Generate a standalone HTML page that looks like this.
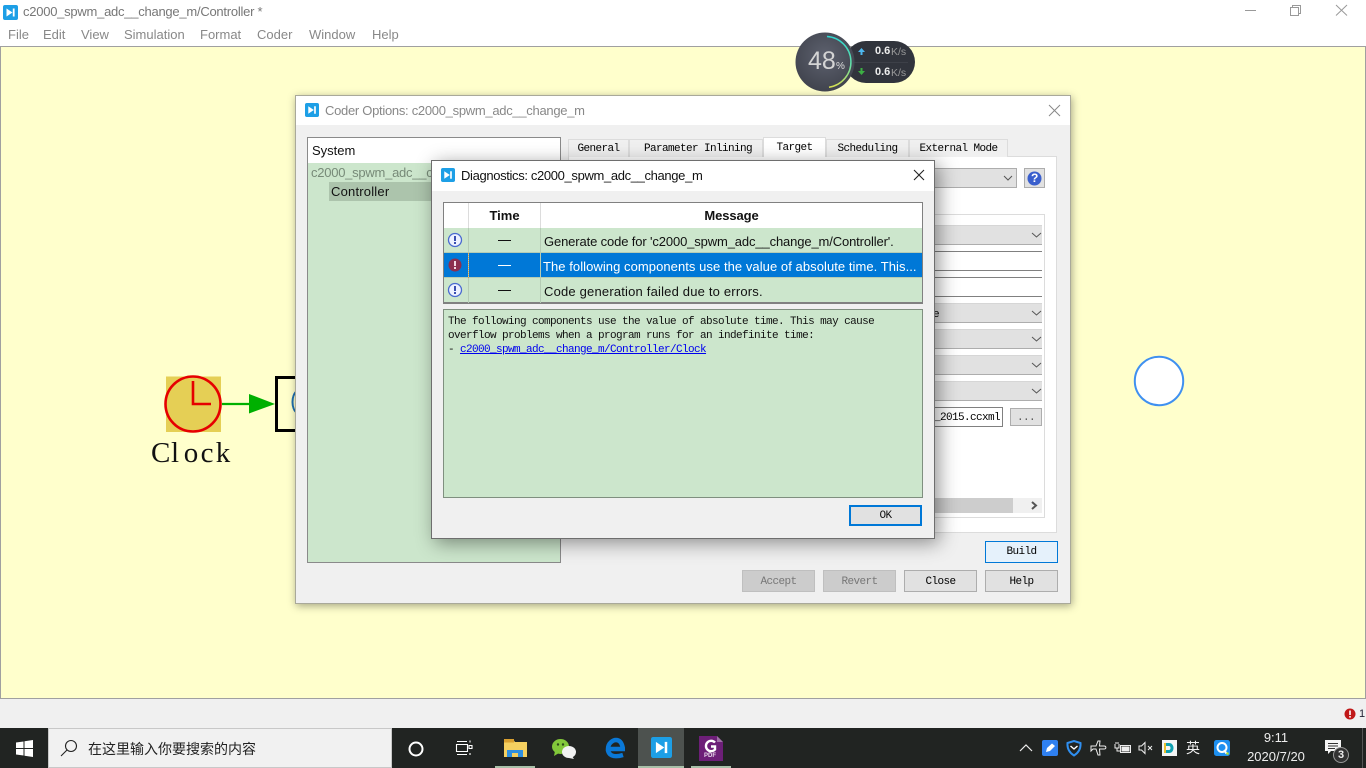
<!DOCTYPE html>
<html lang="en">
<head>
<meta charset="utf-8">
<title>c2000_spwm_adc__change_m/Controller</title>
<style>
html,body{margin:0;padding:0;width:1366px;height:768px;overflow:hidden;background:#fff;}
body{position:relative;font-family:"Liberation Sans","Noto Sans CJK SC",sans-serif;font-size:13px;color:#000;}
div,span,a,svg{position:absolute;box-sizing:border-box;white-space:nowrap;}
.m{font-family:"Liberation Mono","Noto Sans CJK SC",monospace;font-size:11px;letter-spacing:-.6px;line-height:14px;}
.mn{color:#888;top:27px;line-height:16px;font-size:13px;}
.btn{background:#e1e1e1;border:1px solid #adadad;height:22px;width:73px;top:570px;text-align:center;line-height:22px;}
.cb{background:#e1e1e1;border-bottom:1px solid #adadad;border-top:1px solid #d6d6d6;left:930px;width:112px;height:20px;}
.tab{top:139px;height:18px;background:#f0f0f0;border:1px solid #dcdcdc;border-bottom:none;text-align:center;line-height:18px;}
.ck{top:437px;width:16px;text-align:center;font-family:"Liberation Serif",serif;font-size:29px;line-height:32px;color:#111;}
</style>
</head>
<body>
<!-- title bar -->
<svg style="left:3px;top:5px" width="15" height="15" viewBox="0 0 15 15"><rect width="15" height="15" rx="2" fill="#1d9fe6"/><path d="M3.5 3.5L9.500 7.500L3.500 11.500Z" fill="#fff"/><rect x="9.800" y="3.500" width="1.800" height="8" fill="#fff"/></svg>
<span style="left:23px;top:3px;color:#777;line-height:18px;font-size:13px;letter-spacing:-.25px">c2000_spwm_adc__change_m/Controller *</span>
<span class="mn" style="left:8px">File</span>
<span class="mn" style="left:43px">Edit</span>
<span class="mn" style="left:81px">View</span>
<span class="mn" style="left:124px">Simulation</span>
<span class="mn" style="left:200px">Format</span>
<span class="mn" style="left:257px">Coder</span>
<span class="mn" style="left:309px">Window</span>
<span class="mn" style="left:372px">Help</span>
<svg style="left:1240px;top:0" width="126" height="20" viewBox="0 0 126 20" fill="none" stroke="#999" stroke-width="1"><path d="M5 10.500H16"/><path d="M50.500 7.500H58.500V15.500H50.500ZM52.500 7.500V5.500H60.500V13.500H58.500"/><path d="M96 5L107 15.500M107 5L96 15.500"/></svg>

<!-- canvas -->
<div style="left:0;top:46px;width:1366px;height:653px;background:#ffffcc;border:1px solid #a0a0a0"></div>
<div style="left:0;top:699px;width:1366px;height:29px;background:#f0f0f0"></div>

<!-- clock block -->
<svg style="left:140px;top:365px" width="160" height="80" viewBox="140 365 160 80">
<rect x="166" y="376.500" width="55" height="55.500" fill="#e5cf55"/>
<circle cx="193" cy="404" r="27.500" fill="#e5cf55" stroke="#e60000" stroke-width="2.600"/>
<path d="M193 381V404H211" fill="none" stroke="#e60000" stroke-width="2.600"/>
<path d="M222 404H252" stroke="#00b000" stroke-width="2.200"/>
<path d="M249 394L275 404L249 413.500Z" fill="#00b000"/>
<path d="M296 377.500H276.500V430.500H296" fill="none" stroke="#000" stroke-width="3"/>
<path d="M297 391C291 395 291 409 297 413" fill="none" stroke="#1e6fb0" stroke-width="2"/>
</svg>
<span class="ck" style="left:151px">C</span>
<span class="ck" style="left:167px">l</span>
<span class="ck" style="left:183px">o</span>
<span class="ck" style="left:199px">c</span>
<span class="ck" style="left:215px">k</span>

<!-- circle -->
<svg style="left:1130px;top:352px" width="58" height="58"><circle cx="29" cy="29" r="24.200" fill="#fff" stroke="#3f90f0" stroke-width="2"/></svg>

<!-- Coder Options dialog -->
<div style="left:295px;top:95px;width:776px;height:509px;background:#f0f0f0;border:1px solid #a9a99a;box-shadow:1px 2px 8px rgba(0,0,0,.35)"></div>
<div style="left:296px;top:96px;width:774px;height:29px;background:#fff"></div>
<svg style="left:305px;top:103px" width="14" height="14" viewBox="0 0 15 15"><rect width="15" height="15" rx="2" fill="#1d9fe6"/><path d="M3.500 3.500L9.500 7.500L3.500 11.500Z" fill="#fff"/><rect x="9.800" y="3.500" width="1.800" height="8" fill="#fff"/></svg>
<span style="left:325px;top:102px;color:#888;line-height:18px;letter-spacing:-.29px">Coder Options: c2000_spwm_adc__change_m</span>
<svg style="left:1048px;top:104px" width="13" height="13" fill="none" stroke="#888" stroke-width="1"><path d="M1 1L12 12M12 1L1 12"/></svg>

<!-- left tree -->
<div style="left:307px;top:137px;width:254px;height:426px;background:#cce6cc;border:1px solid #8a8a8a"></div>
<div style="left:308px;top:138px;width:252px;height:25px;background:#fff"></div>
<span style="left:312px;top:143px;line-height:16px;color:#111">System</span>
<span style="left:311px;top:165px;line-height:16px;color:#778a78;letter-spacing:-.25px">c2000_spwm_adc__ch</span>
<div style="left:329px;top:182px;width:110px;height:19px;background:#acc4ac"></div>
<span style="left:331px;top:184px;line-height:16px;color:#111;letter-spacing:.2px">Controller</span>

<!-- tabs -->
<div style="left:568px;top:156px;width:489px;height:377px;background:#fff;border:1px solid #dcdcdc"></div>
<div class="tab m" style="left:568px;width:61px">General</div>
<div class="tab m" style="left:629px;width:134px;padding-left:4px">Parameter Inlining</div>
<div class="tab m" style="left:763px;width:63px;top:137px;height:20px;background:#fff;line-height:20px">Target</div>
<div class="tab m" style="left:826px;width:83px">Scheduling</div>
<div class="tab m" style="left:909px;width:99px">External Mode</div>

<div style="left:900px;top:168px;width:117px;height:20px;background:#e1e1e1;border:1px solid #adadad"></div>
<svg style="left:1003px;top:175px" width="10" height="7" fill="none" stroke="#555"><path d="M1 1L5 5L9 1"/></svg>
<div style="left:1024px;top:168px;width:21px;height:20px;background:#e1e1e1;border:1px solid #adadad"></div>
<svg style="left:1026px;top:170px" width="17" height="17" viewBox="0 0 17 17"><circle cx="8.500" cy="8.500" r="7" fill="#3a5fcd"/></svg>
<span style="left:1031px;top:170px;color:#fff;font-weight:bold;font-size:12px;line-height:16px">?</span>

<div style="left:900px;top:214px;width:145px;height:304px;background:#fff;border:1px solid #dcdcdc"></div>
<div class="cb" style="top:225px"></div>
<div style="left:930px;top:251px;width:112px;height:20px;background:#fff;border-top:1px solid #808080;border-bottom:1px solid #808080"></div>
<div style="left:930px;top:277px;width:112px;height:20px;background:#fff;border-top:1px solid #808080;border-bottom:1px solid #808080"></div>
<div class="cb" style="top:303px"></div>
<div class="cb" style="top:329px"></div>
<div class="cb" style="top:355px"></div>
<div class="cb" style="top:381px"></div>
<svg style="left:1031px;top:226px" width="12" height="176" fill="none" stroke="#555"><path d="M1 7L5.500 11L10 7M1 85L5.500 89L10 85M1 111L5.500 115L10 111M1 137L5.500 141L10 137M1 163L5.500 167L10 163"/></svg>
<span class="m" style="left:933px;top:308px">e</span>
<div style="left:930px;top:407px;width:73px;height:20px;background:#fff;border:1px solid #808080"></div>
<span class="m" style="left:934px;top:411px">_2015.ccxml</span>
<div class="m" style="left:1010px;top:408px;width:32px;height:18px;background:#e1e1e1;border:1px solid #adadad;text-align:center;line-height:18px;color:#555">...</div>
<div style="left:930px;top:498px;width:112px;height:15px;background:#f0f0f0"></div>
<div style="left:930px;top:498px;width:83px;height:15px;background:#cdcdcd"></div>
<svg style="left:1030px;top:501px" width="8" height="9" fill="none" stroke="#555" stroke-width="2"><path d="M2 1L6 4.500L2 8"/></svg>

<div class="btn m" style="left:985px;top:541px;background:#e5f1fb;border-color:#0078d7;line-height:21px">Build</div>
<div class="btn m" style="left:742px;background:#ccc;border-color:#bfbfbf;color:#777">Accept</div>
<div class="btn m" style="left:823px;background:#ccc;border-color:#bfbfbf;color:#777">Revert</div>
<div class="btn m" style="left:904px">Close</div>
<div class="btn m" style="left:985px">Help</div>

<!-- Diagnostics dialog -->
<div style="left:431px;top:160px;width:504px;height:379px;background:#f0f0f0;border:1px solid #6e6e6e;box-shadow:4px 4px 18px rgba(0,0,0,.42)"></div>
<div style="left:432px;top:161px;width:502px;height:30px;background:#fff"></div>
<svg style="left:441px;top:168px" width="14" height="14" viewBox="0 0 15 15"><rect width="15" height="15" rx="2" fill="#1d9fe6"/><path d="M3.500 3.500L9.500 7.500L3.500 11.500Z" fill="#fff"/><rect x="9.800" y="3.500" width="1.800" height="8" fill="#fff"/></svg>
<span style="left:461px;top:167px;line-height:18px;color:#111;letter-spacing:-.35px">Diagnostics: c2000_spwm_adc__change_m</span>
<svg style="left:913px;top:169px" width="12" height="12" fill="none" stroke="#222" stroke-width="1.100"><path d="M1 1L11 11M11 1L1 11"/></svg>

<!-- table -->
<div style="left:443px;top:202px;width:480px;height:102px;background:#cce6cc;border:1px solid #808080;border-bottom-width:2px"></div>
<div style="left:444px;top:203px;width:478px;height:25px;background:#fff"></div>
<div style="left:444px;top:253px;width:478px;height:25px;background:#0078d7"></div>
<div style="left:444px;top:252px;width:478px;height:1px;background:#b5ccb5"></div>
<div style="left:444px;top:277px;width:478px;height:1px;background:#b5ccb5"></div>
<div style="left:468px;top:203px;width:1px;height:25px;background:#dcdcdc"></div>
<div style="left:540px;top:203px;width:1px;height:25px;background:#dcdcdc"></div>
<div style="left:468px;top:228px;width:1px;height:75px;background:#b5ccb5"></div>
<div style="left:467px;top:253px;width:2px;height:25px;border-right:1px dotted #e0a040"></div>
<div style="left:540px;top:228px;width:1px;height:75px;background:#b5ccb5"></div>
<div style="left:469px;top:203px;width:71px;height:25px;text-align:center;font-weight:bold;line-height:25px;color:#111">Time</div>
<div style="left:541px;top:203px;width:381px;height:25px;text-align:center;font-weight:bold;line-height:25px;color:#111;letter-spacing:-.1px">Message</div>
<div style="left:498px;top:240px;width:13px;height:1px;background:#111"></div>
<div style="left:498px;top:265px;width:13px;height:1px;background:#fff"></div>
<div style="left:498px;top:290px;width:13px;height:1px;background:#111"></div>
<span style="left:544px;top:233px;line-height:17px;color:#111;letter-spacing:-.13px">Generate code for 'c2000_spwm_adc__change_m/Controller'.</span>
<span style="left:543px;top:258px;line-height:17px;color:#fff;letter-spacing:.06px">The following components use the value of absolute time. This...</span>
<span style="left:544px;top:283px;line-height:17px;color:#111;letter-spacing:.19px">Code generation failed due to errors.</span>
<svg style="left:446px;top:231px" width="20" height="70" viewBox="0 0 20 70">
<circle cx="9" cy="9" r="6.500" fill="#eef2ff" stroke="#4a6ad0" stroke-width="1.300"/><rect x="8" y="5" width="2" height="5" fill="#3a4fb0"/><rect x="8" y="11" width="2" height="2" fill="#3a4fb0"/>
<circle cx="9" cy="34" r="6.500" fill="#8c2f4e"/><rect x="8" y="30" width="2" height="5" fill="#f0d8e0"/><rect x="8" y="36" width="2" height="2" fill="#f0d8e0"/>
<circle cx="9" cy="59" r="6.500" fill="#eef2ff" stroke="#4a6ad0" stroke-width="1.300"/><rect x="8" y="55" width="2" height="5" fill="#3a4fb0"/><rect x="8" y="61" width="2" height="2" fill="#3a4fb0"/>
</svg>

<!-- detail pane -->
<div style="left:443px;top:309px;width:480px;height:189px;background:#cce6cc;border:1px solid #7f8f7f"></div>
<span class="m" style="left:448px;top:315px;color:#111">The following components use the value of absolute time. This may cause</span>
<span class="m" style="left:448px;top:329px;color:#111">overflow problems when a program runs for an indefinite time:</span>
<span class="m" style="left:448px;top:343px;color:#111">-</span>
<a class="m" style="left:460px;top:343px;color:#0000ee;text-decoration:underline">c2000_spwm_adc__change_m/Controller/Clock</a>
<div class="m" style="left:849px;top:505px;width:73px;height:21px;background:#e1e1e1;border:2px solid #0078d7;text-align:center;line-height:19px;color:#111">OK</div>

<!-- network widget -->
<div style="left:845px;top:41px;width:70px;height:42px;background:#31343c;border-radius:21px"></div>
<div style="left:852px;top:62px;width:56px;height:1px;background:#3d4048"></div>
<svg style="left:794px;top:30px" width="64" height="64" viewBox="0 0 64 64">
<defs><radialGradient id="g" cx="50%" cy="40%" r="65%"><stop offset="0" stop-color="#5d616e"/><stop offset="1" stop-color="#3e414b"/></radialGradient>
<linearGradient id="r" x1="0" y1="0" x2="0" y2="1"><stop offset="0" stop-color="#2fd6d0"/><stop offset=".55" stop-color="#62e0a8"/><stop offset="1" stop-color="#d8e050"/></linearGradient></defs>
<circle cx="31" cy="32" r="29.500" fill="url(#g)"/>
<path d="M33 6.500A25.500 25.500 0 0 1 35 57.200" fill="none" stroke="url(#r)" stroke-width="1.500"/>
</svg>
<span style="left:808px;top:46px;color:#d4d4d4;font-size:25px;line-height:30px">48</span>
<span style="left:836px;top:61px;color:#ddd;font-size:10px;line-height:12px">%</span>
<svg style="left:857px;top:47px" width="10" height="34" viewBox="0 0 10 34"><path d="M4.500 1L8 5H5.500V8H3.500V5H1Z" fill="#4db8f0"/><path d="M3.500 21H5.500V24H8L4.500 28L1 24H3.500Z" fill="#3cb043"/></svg>
<span style="left:875px;top:45px;color:#eee;font-size:11px;line-height:13px;font-weight:bold">0.6</span>
<span style="left:891px;top:46px;color:#999;font-size:10.500px;line-height:13px">K/s</span>
<span style="left:875px;top:66px;color:#eee;font-size:11px;line-height:13px;font-weight:bold">0.6</span>
<span style="left:891px;top:67px;color:#999;font-size:10.500px;line-height:13px">K/s</span>

<!-- status -->
<svg style="left:1344px;top:708px" width="12" height="12"><circle cx="6" cy="6" r="5.500" fill="#c01818"/><rect x="5.200" y="2.500" width="1.600" height="4.500" fill="#fff"/><rect x="5.200" y="8" width="1.600" height="1.600" fill="#fff"/></svg>
<span style="left:1359px;top:707px;font-size:11px;line-height:14px;color:#223">1</span>

<!-- taskbar -->
<div style="left:0;top:728px;width:1366px;height:40px;background:#212422"></div>
<svg style="left:16px;top:740px" width="17" height="17" viewBox="0 0 17 17" fill="#fff"><path d="M0 2.500L7.500 1.500V8H0ZM8.500 1.300L17 0V8H8.500ZM0 9H7.500V15.500L0 14.500ZM8.500 9H17V17L8.500 15.700Z"/></svg>
<div style="left:48px;top:728px;width:344px;height:40px;background:#f1f1f1;border:1px solid #c8c8c8"></div>
<svg style="left:60px;top:739px" width="18" height="18" fill="none" stroke="#222" stroke-width="1.100"><circle cx="11" cy="7" r="5.500"/><path d="M7 11L1 17"/></svg>
<span style="left:88px;top:739px;font-size:14px;line-height:20px;color:#222;font-family:'Liberation Sans','Noto Sans CJK SC',sans-serif">在这里输入你要搜索的内容</span>

<svg style="left:408px;top:741px" width="16" height="16" fill="none" stroke="#fff" stroke-width="2"><circle cx="8" cy="8" r="6.500"/></svg>
<svg style="left:455px;top:739px" width="18" height="18" fill="none" stroke="#fff" stroke-width="1.100"><path d="M2 2.500H12M1.500 5.500H12.500V12.500H1.500ZM2 15.500H12M15 1.500V3.500M14 6.500H17V9.500H14ZM15 14V16"/></svg>

<div style="left:495px;top:766px;width:40px;height:2px;background:#a8c0a8"></div>
<svg style="left:504px;top:738px" width="23" height="20" viewBox="0 0 23 20"><path d="M0 1H9L11 4H23V19H0Z" fill="#f5d060"/><rect x="0" y="1" width="10" height="3.500" fill="#d9a030"/><path d="M3 19V12H19V19H14V15H8V19Z" fill="#2f8fe0"/></svg>
<svg style="left:551px;top:738px" width="26" height="22" viewBox="0 0 26 22"><ellipse cx="9.500" cy="8.500" rx="8.500" ry="7.500" fill="#82c83a"/><path d="M4 13L3 18L8 15Z" fill="#82c83a"/><circle cx="7" cy="6.500" r="1.200" fill="#2d4a1a"/><circle cx="12" cy="6.500" r="1.200" fill="#2d4a1a"/><ellipse cx="18" cy="14" rx="7" ry="6" fill="#f2f2f2"/><path d="M21 18L23 21L18 20Z" fill="#f2f2f2"/></svg>
<svg style="left:603px;top:737px" width="22" height="23" viewBox="0 0 22 23" fill="none"><path d="M20 12H5C5 6 10 3 13 3C17 3 19 6 20 12ZM5 12C5 18 10 21 20 18" stroke="#0a78d7" stroke-width="4.500"/></svg>

<div style="left:638px;top:728px;width:46px;height:40px;background:#4d524f"></div>
<div style="left:638px;top:766px;width:46px;height:2px;background:#a8c0a8"></div>
<svg style="left:651px;top:737px" width="21" height="21" viewBox="0 0 15 15"><rect width="15" height="15" rx="1.500" fill="#1d9fe6"/><path d="M3.500 3.500L9.500 7.500L3.500 11.500Z" fill="#fff"/><rect x="9.800" y="3.500" width="1.800" height="8" fill="#fff"/></svg>
<div style="left:691px;top:766px;width:40px;height:2px;background:#a8c0a8"></div>
<svg style="left:699px;top:736px" width="24" height="25" viewBox="0 0 24 25"><path d="M0 0H18L24 6V25H0Z" fill="#6d1f78"/><path d="M18 0V6H24Z" fill="#a070a8"/><path d="M16 6.500A5.200 5.200 0 1 0 16 13.500V10.500H12" fill="none" stroke="#fff" stroke-width="2.400"/></svg>
<span style="left:704px;top:753px;color:#e6d6ea;font-size:6px;line-height:7px;font-weight:bold">PDF</span>

<!-- tray -->
<svg style="left:1019px;top:743px" width="14" height="9" fill="none" stroke="#eee" stroke-width="1.200"><path d="M1 8L7 2L13 8"/></svg>
<svg style="left:1042px;top:740px" width="16" height="16"><rect width="16" height="16" rx="2" fill="#2f80f0"/><path d="M4 12L5 8L10 3.500L13 6L8 11Z" fill="#fff"/></svg>
<svg style="left:1066px;top:740px" width="16" height="17" fill="none" stroke="#2f8ff0" stroke-width="2"><path d="M1.500 3L8 1L14.500 3C15 9 12 13 8 15.500C4 13 1 9 1.500 3Z"/><path d="M4.500 6L8 9L11.500 6" stroke="#fff" stroke-width="1.400"/></svg>
<svg style="left:1090px;top:740px" width="17" height="16" fill="none" stroke="#eee"><path d="M1 6H6L8 1H10L9.500 6H14C16.500 6 16.500 9 14 9H9.500L10 15H8L6 9H3L1 11Z"/></svg>
<svg style="left:1114px;top:741px" width="17" height="14" fill="none" stroke="#eee"><rect x="6.500" y="4.500" width="10" height="7"/><rect x="8" y="6" width="7" height="4" fill="#eee"/><path d="M1 3V7H5V3M3 7V10H6M2 3V1M4 3V1"/></svg>
<svg style="left:1138px;top:741px" width="15" height="14" fill="none" stroke="#eee"><path d="M1 5H3.500L7 1.500V12.500L3.500 9H1Z"/><path d="M10 5L14 9M14 5L10 9"/></svg>
<svg style="left:1162px;top:740px" width="15" height="16"><rect width="15" height="16" fill="#f5f5f5"/><path d="M4 3H7C13 3 13 13 7 13H4V10H7C9 10 9 6 7 6H4Z" fill="#10a0b0"/><rect x="2" y="3" width="2" height="10" fill="#e8c030"/></svg>
<span style="left:1186px;top:739px;color:#f2f2f2;font-size:14px;line-height:19px;font-family:'Liberation Sans','Noto Sans CJK SC',sans-serif">英</span>
<svg style="left:1214px;top:740px" width="16" height="16"><rect width="16" height="16" rx="2.500" fill="#1e90f0"/><circle cx="8" cy="7.500" r="4.500" fill="none" stroke="#fff" stroke-width="2"/><path d="M10 10L12.500 13.500" stroke="#fff" stroke-width="2"/><circle cx="13.500" cy="13.500" r="1.300" fill="#b8e030"/></svg>
<div style="left:1236px;top:730px;width:80px;text-align:center;color:#eee;font-size:13px;line-height:16px">9:11</div>
<div style="left:1236px;top:749px;width:80px;text-align:center;color:#eee;font-size:13px;line-height:16px">2020/7/20</div>
<svg style="left:1325px;top:740px" width="16" height="15"><path d="M0 0H16V11H6L3 14V11H0Z" fill="#f5f5f5"/><path d="M3 3.500H13M3 6H13M3 8.500H10" stroke="#333"/></svg>
<svg style="left:1332px;top:746px" width="18" height="18"><circle cx="9" cy="9" r="7.500" fill="#333" stroke="#999"/></svg>
<div style="left:1332px;top:747px;width:18px;text-align:center;color:#eee;font-size:11px;line-height:16px;font-weight:bold">3</div>
<div style="left:1362px;top:728px;width:1px;height:40px;background:#555"></div>
</body>
</html>
